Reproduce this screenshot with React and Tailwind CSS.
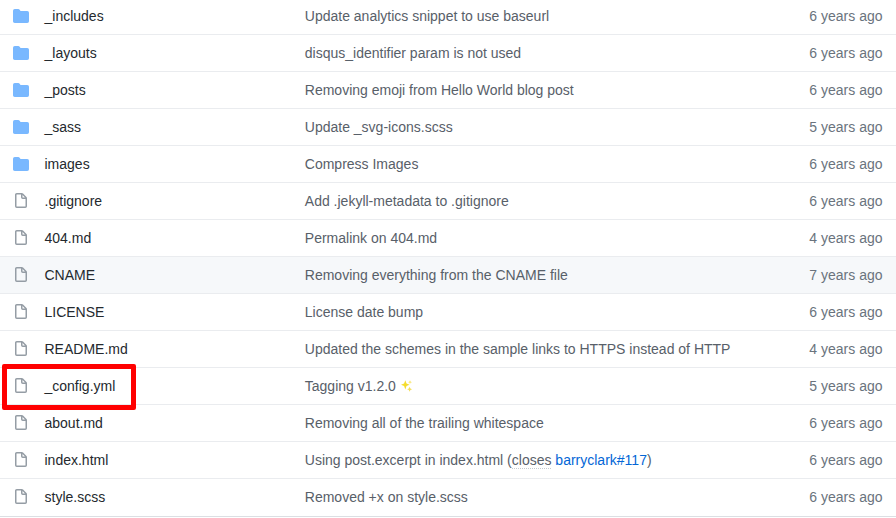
import React from "react";

const rows = [
  { dir: true, name: "_includes", msg: "Update analytics snippet to use baseurl", age: "6 years ago" },
  { dir: true, name: "_layouts", msg: "disqus_identifier param is not used", age: "6 years ago" },
  { dir: true, name: "_posts", msg: "Removing emoji from Hello World blog post", age: "6 years ago" },
  { dir: true, name: "_sass", msg: "Update _svg-icons.scss", age: "5 years ago" },
  { dir: true, name: "images", msg: "Compress Images", age: "6 years ago" },
  { name: ".gitignore", msg: "Add .jekyll-metadata to .gitignore", age: "6 years ago" },
  { name: "404.md", msg: "Permalink on 404.md", age: "4 years ago" },
  { name: "CNAME", msg: "Removing everything from the CNAME file", age: "7 years ago", active: true },
  { name: "LICENSE", msg: "License date bump", age: "6 years ago" },
  { name: "README.md", msg: "Updated the schemes in the sample links to HTTPS instead of HTTP", age: "4 years ago" },
  { name: "_config.yml", msg: <>Tagging v1.2.0 <Sparkles /></>, age: "5 years ago", marked: true },
  { name: "about.md", msg: "Removing all of the trailing whitespace", age: "6 years ago" },
  {
    name: "index.html",
    msg: (
      <>
        Using post.excerpt in index.html (
        <span className="border-b border-dotted border-[#c6cbd1]">closes</span>{" "}
        <a className="text-[#0366d6]">barryclark#117</a>)
      </>
    ),
    age: "6 years ago",
  },
  { name: "style.scss", msg: "Removed +x on style.scss", age: "6 years ago" },
];

function Sparkles() {
  return (
    <svg viewBox="0 0 12 12" className="ml-px inline-block size-3 align-[-1px]" fill="#f5dc2c">
      <path d="M4.3.2 5.5 3.6 8.6 4.7 5.5 5.9 4.3 9.4 3.1 5.9 0 4.7 3.1 3.6Z" />
      <path d="M9 .3 9.6 1.6 11 2.2 9.6 2.8 9 4.1 8.4 2.8 7.1 2.2 8.4 1.6Z" fill="#f8e778" />
      <path d="M8.6 6.8 9.4 8.5 11.1 9.3 9.4 10.1 8.6 11.8 7.8 10.1 6.1 9.3 7.8 8.5Z" fill="#f4df5a" />
    </svg>
  );
}

function FolderIcon() {
  return (
    <svg viewBox="0 0 16 16" className="size-4" fill="#79b8ff">
      <path d="M1.75 1A1.75 1.75 0 000 2.75v10.5C0 14.216.784 15 1.75 15h12.5A1.75 1.75 0 0016 13.25v-8.5A1.75 1.75 0 0014.25 3h-6.5a.25.25 0 01-.2-.1l-.9-1.2c-.33-.44-.85-.7-1.4-.7h-3.5z" />
    </svg>
  );
}

function FileIcon() {
  return (
    <svg viewBox="0 0 16 16" className="size-4" fill="#959da5">
      <path
        fillRule="evenodd"
        d="M3.75 1.5a.25.25 0 00-.25.25v11.5c0 .138.112.25.25.25h8.5a.25.25 0 00.25-.25V6H9.75A1.75 1.75 0 018 4.25V1.5H3.75zm5.75.56v2.19c0 .138.112.25.25.25h2.19L9.5 2.06zM2 1.75C2 .784 2.784 0 3.75 0h5.086c.464 0 .909.184 1.237.513l3.414 3.414c.329.328.513.773.513 1.237v8.086A1.75 1.75 0 0112.25 15h-8.5A1.75 1.75 0 012 13.25V1.75z"
      />
    </svg>
  );
}

export default function App() {
  return (
    <div className="h-[518px] w-[896px] overflow-hidden bg-white font-['Liberation_Sans',Arial,sans-serif] text-[14px] leading-5">
      <div className="-mt-[3px] border-b border-[#dcdfe3]">
        {rows.map((r) => (
          <div
            key={r.name}
            className={`relative flex h-[37px] items-center border-t border-[#eaecef] pl-[13px] pr-[13.5px] last:h-[38px] last:pb-px ${r.active ? "bg-[#f6f8fa]" : ""} ${r.marked ? "z-10" : ""}`}
          >
            <div className="mr-[15.5px] w-4 shrink-0">{r.dir ? <FolderIcon /> : <FileIcon />}</div>
            <div className="w-[260.3px] shrink-0 text-[#24292e]">{r.name}</div>
            <div className="flex-1 whitespace-nowrap text-[#586069]">{r.msg}</div>
            <div className="shrink-0 text-right text-[#6a737d]">{r.age}</div>
            {r.marked && (
              <div className="absolute left-[2px] -top-[4px] h-[46px] w-[134px] rounded-[2px] border-5 border-[#ff0000]" />
            )}
          </div>
        ))}
      </div>
    </div>
  );
}
